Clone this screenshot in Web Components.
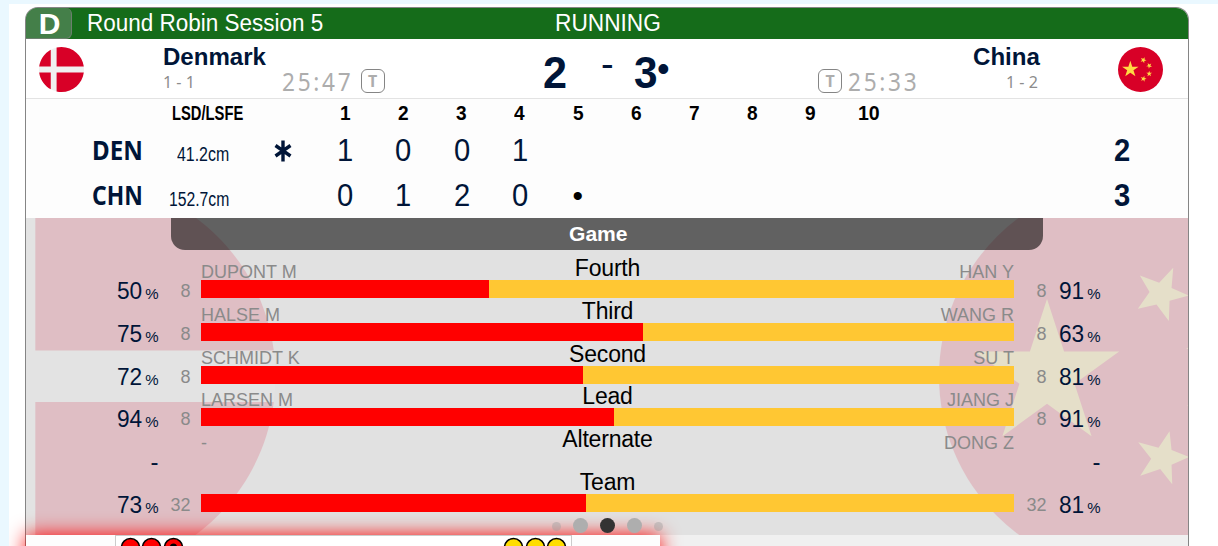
<!DOCTYPE html>
<html lang="en">
<head>
<meta charset="utf-8">
<title>Session 5</title>
<style>
body {
  margin: 0;
  padding: 4px 0 0 9px;
  height: 542px;
  overflow: hidden;
  background: #eaf8ff;
  font-family: "Liberation Sans", Arial, sans-serif;
}
</style>
</head>
<body>
<cg-page>
  <cg-board>
    <cg-header slot="header" sheet="D" session="Round Robin Session 5" state="RUNNING"></cg-header>
    <cg-teams slot="header"></cg-teams>
    <cg-linescore slot="header"></cg-linescore>
    <cg-stats></cg-stats>
    <cg-stones slot="footer"></cg-stones>
  </cg-board>
</cg-page>
<script>
'use strict';

function attachTemplate(el, html) {
	const t = document.createElement('template');
	t.innerHTML = html;
	const shadow = el.attachShadow({mode: 'open'});
	shadow.appendChild(t.content.cloneNode(true));
	return shadow;
}

// One line of text condensed or stretched to the given advance width
class FitText extends HTMLElement {
	constructor() {
		super();
		attachTemplate(this, `
<style>
:host { display: inline-block; white-space: nowrap; text-align: left; }
span { display: inline-block; transform-origin: 0 50%; }
</style>
<span><slot></slot></span>`);
	}

	connectedCallback() {
		const span = this.shadowRoot.querySelector('span');
		const width = Number(this.getAttribute('width'));
		this.style.width = width + 'px';
		span.style.transform = `scaleX(${width / span.offsetWidth})`;
	}
}

function starPoints(cx, cy, r, deg) {
	const pts = [];
	for (let i = 0; i < 10; i++) {
		const a = (deg + i * 36) * Math.PI / 180;
		const d = i % 2 ? r * 0.382 : r;
		pts.push((cx + d * Math.cos(a)).toFixed(1) + ',' + (cy + d * Math.sin(a)).toFixed(1));
	}
	return pts.join(' ');
}

const flags = {
	den: `
<circle cx="256" cy="256" r="256" fill="#f0f0f0"/>
<path fill="#d80027" d="M200.3 222.6h309.5C493.500 96.600 386.100 0 256 0c-19.100 0-37.700 2.100-55.700 6.100zM133.600 222.600V31.100C63.300 71.100 12.900 140.900 2.200 222.600zM133.600 289.400H2.200c10.700 81.700 61.100 151.500 131.400 191.500zM200.300 289.400v216.500c17.900 4 36.500 6.100 55.700 6.100 130.100 0 237.500-96.600 253.800-222.600z"/>`,
	chn: `
<circle cx="256" cy="256" r="256" fill="#d80027"/>
<g fill="#ffda44">
<path d="M140.200 155.800l22.100 68h71.500l-57.900 42 22.100 68-57.800-42-57.900 42 22.100-68-57.800-42H118z"/>
<polygon points="260.700,125.200 285.800,134.700 304,115.300 301.800,141.600 324.300,151.200 299.200,158.100 298.300,184.400 282.300,162.800 258.100,168.400 273.300,146.800"/>
<polygon points="258.600,341.800 284.900,348.700 299.200,327.500 301.800,351.700 325,360.800 301.800,370.800 302.700,396.300 287.100,376.400 261.200,385 275.400,363"/>
<polygon points="${starPoints(355, 213, 35, 168)}"/>
<polygon points="${starPoints(355, 304, 35, -162)}"/>
</g>`,
};

class CgFlag extends HTMLElement {
	constructor() {
		super();
		attachTemplate(this, `
<style>
:host { display: block; }
svg { display: block; width: 100%; height: 100%; }
</style>
<svg viewBox="0 0 512 512">${flags[this.getAttribute('code')]}</svg>`);
	}
}

class CgPage extends HTMLElement {
	constructor() {
		super();
		attachTemplate(this, `
<style>
:host {
  display: block;
  box-sizing: border-box;
  height: 542px;
  padding: 3px 29px 0 16px;
  overflow: hidden;
  background: #fff;
}
</style>
<slot></slot>`);
	}
}

class CgBoard extends HTMLElement {
	constructor() {
		super();
		attachTemplate(this, `
<style>
:host {
  display: block;
  box-sizing: border-box;
  width: 1164px;
  height: 539px;
  border: 1px solid #858585;
  border-bottom: 0;
  border-radius: 13px 13px 0 0;
  background: #f0f0f0;
}
</style>
<slot name="header"></slot>
<slot></slot>
<slot name="footer"></slot>`);
	}
}

class CgHeader extends HTMLElement {
	constructor() {
		super();
		attachTemplate(this, `
<style>
:host {
  display: grid;
  grid-template-columns: 46px 15px 468px 1fr;
  height: 31px;
  border-radius: 12px 12px 0 0;
  background: #156c1a;
  color: #fff;
  font-size: 23px;
  line-height: 30px;
}
.sheet {
  box-sizing: border-box;
  height: 31px;
  padding: 1px 0 0 2px;
  border: 1px solid #6b7f6d;
  border-width: 0 1px 1px 0;
  border-radius: 12px 6px 6px 0;
  background: #447f49;
  font: bold 30px/30px "Liberation Sans", Arial, sans-serif;
  text-align: center;
}
</style>
<div class="sheet">${this.getAttribute('sheet')}</div>
<div></div>
<div><fit-text width="236.500">${this.getAttribute('session')}</fit-text></div>
<div><fit-text width="105.500">${this.getAttribute('state')}</fit-text></div>`);
	}
}

class CgTeams extends HTMLElement {
	constructor() {
		super();
		attachTemplate(this, `
<style>
:host {
  display: grid;
  grid-template-columns: 137px 119px 260px 276px 130px 92px 148px;
  box-sizing: border-box;
  height: 60px;
  border-bottom: 1px solid #e3e3e3;
  background: #fff;
  color: #001538;
}
cg-flag { width: 45px; height: 45px; margin: 8px 0 0 13px; }
cg-flag[code="chn"] { margin-left: 78px; }
.name { font-weight: bold; font-size: 23px; line-height: 37px; white-space: nowrap; }
.record {
  font-family: "Noto Sans", sans-serif;
  font-size: 17px;
  line-height: 12px;
  letter-spacing: 2px;
  word-spacing: -4px;
  color: #8c8c8c;
}
.right { text-align: right; }
.timer {
  display: flex;
  gap: 7px;
  padding-top: 30px;
  font-family: "Noto Sans", sans-serif;
  font-size: 25px;
  line-height: 25px;
  letter-spacing: 3px;
  color: #adadad;
}
.t {
  box-sizing: border-box;
  width: 24px;
  height: 24px;
  border: 1px solid #858585;
  border-radius: 6px;
  font-size: 16px;
  font-weight: bold;
  line-height: 23px;
  letter-spacing: 0;
  text-align: center;
}
.t + fit-text { margin-left: -1px; }
.score { display: flex; }
.points { width: 59px; font-size: 45px; font-weight: bold; line-height: 67px; }
.points:first-child { box-sizing: border-box; padding-left: 0.700px; }
.points + .dash { width: 33px; font-size: 38px; line-height: 51px; }
.dash + .points { width: 23px; }
.dot { font-size: 36px; line-height: 60px; }
</style>
<cg-flag code="den"></cg-flag>
<div>
  <div class="name"><fit-text width="102.500">Denmark</fit-text></div>
  <div class="record"><fit-text width="34">1 - 1</fit-text></div>
</div>
<div class="timer"><fit-text width="71.500">25:47</fit-text><div class="t">T</div></div>
<div class="score">
  <div class="points"><fit-text width="24">2</fit-text></div>
  <div class="dash">-</div>
  <div class="points"><fit-text width="23.500">3</fit-text></div>
  <div class="dot">•</div>
</div>
<div class="timer"><div class="t">T</div><fit-text width="71.500">25:33</fit-text></div>
<div class="right">
  <div class="name"><fit-text width="67">China</fit-text></div>
  <div class="record"><fit-text width="34">1 - 2</fit-text></div>
</div>
<cg-flag code="chn"></cg-flag>`);
	}
}

const linescore = [
	{ code: 'DEN', lsd: '41.2cm', width: 52.5, hammer: true, ends: [1, 0, 0, 1], total: 2 },
	{ code: 'CHN', lsd: '152.7cm', width: 60.5, hammer: false, ends: [0, 1, 2, 0, '•'], total: 3 },
];

const hammerIcon = `<svg width="18" height="22" viewBox="0 0 18 22"><path d="M9 0.500v21M1.500 5.500l15 10.500M16.500 5.500l-15 10.500" stroke="#001538" stroke-width="3.400"/></svg>`;

class CgLinescore extends HTMLElement {
	constructor() {
		super();
		let heads = '';
		for (let i = 1; i <= 10; i++) {
			heads += `<div class="mid"><fit-text width="${i > 9 ? 21.5 : 10.5}">${i}</fit-text></div>`;
		}
		let rows = '';
		for (const r of linescore) {
			let ends = '';
			for (let i = 0; i < 10; i++) {
				const v = r.ends[i];
				if (v === undefined) {
					ends += '<div></div>';
				} else if (v === '•') {
					ends += '<div class="mid now">•</div>';
				} else {
					ends += `<div class="mid"><fit-text width="16">${v}</fit-text></div>`;
				}
			}
			rows += `
<div class="row">
  <div></div>
  <div class="code"><fit-text width="51">${r.code}</fit-text></div>
  <div class="lsd"><fit-text width="${r.width}">${r.lsd}</fit-text></div>
  <div class="hammer">${r.hammer ? hammerIcon : ''}</div>
  ${ends}
  <div class="total"><fit-text width="16">${r.total}</fit-text></div>
</div>`;
		}
		attachTemplate(this, `
<style>
:host { display: block; height: 119px; background: #fdfdfd; color: #001538; }
.row {
  display: grid;
  grid-template-columns: 66px 70px 67.500px 86.700px repeat(10, 58.150px) 1fr;
  height: 44.800px;
  font-size: 31px;
  line-height: 45px;
}
.head { height: 29.200px; font-size: 20px; font-weight: bold; line-height: 28.200px; color: #000; }
.head .lsd { justify-self: end; margin-right: -14px; }
.mid { text-align: center; }
.code { font: bold 26px/44px "Noto Sans", sans-serif; }
.row:not(.head) .lsd { font-size: 20px; line-height: 52px; text-align: right; }
.hammer { padding: 12px 0 0 44.500px; line-height: 0; }
.now { color: #000; font-size: 30px; line-height: 46px; }
.total { padding-left: 216px; font-weight: bold; }
</style>
<div class="row head">
  <div></div><div></div>
  <div class="lsd"><fit-text width="71.500">LSD/LSFE</fit-text></div>
  <div></div>
  ${heads}
</div>
${rows}`);
	}
}

class CgStatRow extends HTMLElement {
	constructor() {
		super();
		const a = name => this.getAttribute(name);
		const pct = v => v === '-' ? '-' : `<fit-text width="25.500">${v}</fit-text><small>%</small>`;
		const bar = a('split') ? `<div class="bar"><div class="red" style="width: ${a('split')}px"></div></div>` : '';
		attachTemplate(this, `
<style>
:host {
  display: grid;
  grid-template-columns: 132.500px 32px 10.500px 813px 32.500px 54px;
  height: 42.800px;
  color: #001538;
}
.pct, .count { padding-top: 30px; text-align: right; white-space: nowrap; }
.pct { font-size: 24px; line-height: 21.600px; }
small { margin-left: 3px; font-size: 15px; }
.count { font-size: 18px; line-height: 23.400px; color: #8a8a8a; }
.info {
  display: grid;
  grid-template-columns: 1fr auto 1fr;
  height: 30px;
  font-size: 18px;
  line-height: 45.700px;
  color: #8a8a8a;
}
.info > :last-child { text-align: right; }
.label { font-size: 23px; line-height: 36.300px; letter-spacing: -0.200px; color: #000; }
.bar { height: 18px; background: #ffc733; }
.red { height: 18px; background: #f00; }
</style>
<div class="pct">${pct(a('left'))}</div>
<div class="count">${a('count')}</div>
<div></div>
<div>
  <div class="info"><span>${a('red')}</span><span class="label">${a('label')}</span><span>${a('yellow')}</span></div>
  ${bar}
</div>
<div class="count">${a('count')}</div>
<div class="pct">${pct(a('right'))}</div>`);
	}
}

class CgStats extends HTMLElement {
	constructor() {
		super();
		attachTemplate(this, `
<style>
:host {
  display: block;
  position: relative;
  height: 317px;
  overflow: hidden;
  background: #e1e1e1;
}
/* oversized team flags behind the numbers */
cg-flag { position: absolute; top: -39px; width: 394.500px; height: 394.500px; opacity: 0.150; }
cg-flag[code="den"] { left: -144.800px; }
cg-flag[code="chn"] { left: 912.700px; }
/* numbers and dots stay above the glow of the stones panel */
.content { position: relative; z-index: 1; }
.title {
  width: 854px;
  height: 32px;
  margin-left: 145px;
  padding-right: 18px;
  border-radius: 0 0 14px 14px;
  background: rgba(0, 0, 0, 0.570);
  color: #fff;
  font-size: 20px;
  font-weight: bold;
  line-height: 32px;
  text-align: center;
}
.dots { display: flex; align-items: center; justify-content: center; gap: 12px; margin-top: 10.500px; height: 16px; }
.dots i { width: 15px; height: 15px; border-radius: 50%; background: #aeaeae; }
.dots i:nth-child(3) { background: #333; }
.dots .far { width: 9px; height: 9px; margin-top: 2px; background: rgba(160, 160, 160, 0.450); }
</style>
<cg-flag code="den"></cg-flag>
<cg-flag code="chn"></cg-flag>
<div class="content">
  <div class="title"><fit-text width="59">Game</fit-text></div>
  <cg-stat-row label="Fourth" red="DUPONT M" yellow="HAN Y" left="50" right="91" count="8" split="288"></cg-stat-row>
  <cg-stat-row label="Third" red="HALSE M" yellow="WANG R" left="75" right="63" count="8" split="442"></cg-stat-row>
  <cg-stat-row label="Second" red="SCHMIDT K" yellow="SU T" left="72" right="81" count="8" split="382"></cg-stat-row>
  <cg-stat-row label="Lead" red="LARSEN M" yellow="JIANG J" left="94" right="91" count="8" split="413"></cg-stat-row>
  <cg-stat-row label="Alternate" red="-" yellow="DONG Z" left="-" right="-" count=""></cg-stat-row>
  <cg-stat-row label="Team" red="" yellow="" left="73" right="81" count="32" split="385"></cg-stat-row>
  <div class="dots"><i class="far"></i><i></i><i></i><i></i><i class="far"></i></div>
</div>`);
	}
}

class CgStones extends HTMLElement {
	constructor() {
		super();
		const stone = (color, marked) => `
<svg width="21" height="21" viewBox="0 0 21 21"><circle cx="10.500" cy="10.500" r="9" fill="${color}" stroke="#000" stroke-width="1.500"/>${marked ? '<circle cx="10.5" cy="10" r="3.5"/>' : ''}</svg>`;
		attachTemplate(this, `
<style>
:host {
  display: grid;
  grid-template-columns: 89px 457px 1fr;
  position: relative;
  width: 634px;
  height: 60px;
  background: #fdfdfd;
  box-shadow: 0 0 20px #f00;
}
.sheet {
  display: flex;
  justify-content: space-between;
  box-sizing: border-box;
  padding: 1px 4px 0;
  border: 1px solid #ccc;
  background: #fff;
}
.sheet div { display: flex; gap: 0.300px; }
</style>
<div></div>
<div class="sheet">
  <div>${stone('#f00')}${stone('#f00')}${stone('#f00', true)}</div>
  <div>${stone('#fd0')}${stone('#fd0')}${stone('#fd0')}</div>
</div>
<div></div>`);
	}
}

customElements.define('fit-text', FitText);
customElements.define('cg-flag', CgFlag);
customElements.define('cg-page', CgPage);
customElements.define('cg-board', CgBoard);
customElements.define('cg-header', CgHeader);
customElements.define('cg-teams', CgTeams);
customElements.define('cg-linescore', CgLinescore);
customElements.define('cg-stat-row', CgStatRow);
customElements.define('cg-stats', CgStats);
customElements.define('cg-stones', CgStones);
</script>
</body>
</html>
